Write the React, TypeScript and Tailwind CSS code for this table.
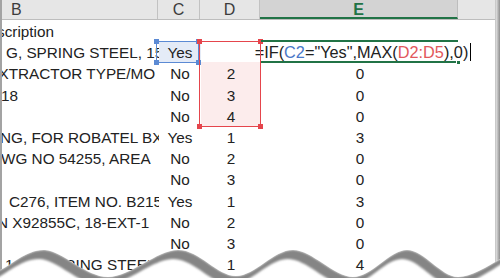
import React from "react";

type Row = {
  b: string;
  bShift: string;
  c: string;
  d: string;
  e: string;
  cFill?: string;
  dFill?: string;
};

const rows: Row[] = [
  { b: "Description", bShift: "ml-[-24.5px]", c: "", d: "", e: "" },
  { b: "G, SPRING STEEL, 15", bShift: "ml-[4px]", c: "Yes", d: "", e: "", cFill: "bg-[#e4ebf7]" },
  { b: "XTRACTOR TYPE/MO", bShift: "ml-[-3.5px]", c: "No", d: "2", e: "0", dFill: "bg-[#fcecec]" },
  { b: "18", bShift: "ml-[-1px]", c: "No", d: "3", e: "0", dFill: "bg-[#fcecec]" },
  { b: "", bShift: "ml-0", c: "No", d: "4", e: "0", dFill: "bg-[#fcecec]" },
  { b: "NG, FOR ROBATEL BX", bShift: "ml-[-2px]", c: "Yes", d: "1", e: "3" },
  { b: "WG NO 54255, AREA", bShift: "ml-[-1px]", c: "No", d: "2", e: "0" },
  { b: "", bShift: "ml-0", c: "No", d: "3", e: "0" },
  { b: "C276, ITEM NO. B215", bShift: "ml-[7px]", c: "Yes", d: "1", e: "3" },
  { b: "N X92855C, 18-EXT-1", bShift: "ml-[-5px]", c: "No", d: "2", e: "0" },
  { b: "", bShift: "ml-0", c: "No", d: "3", e: "0" },
  { b: "1-1/2 SPRING STEEL", bShift: "ml-[3px]", c: "Yes", d: "1", e: "4" },
];

function Formula() {
  return (
    <span className="relative ml-[6px] text-[16.3px]">
      =IF(<span className="text-[#4a78c8]">C2</span>="Yes",MAX(
      <span className="text-[#e2585c]">D2:D5</span>),0)
      <span className="inline-block w-[1px] h-[18px] bg-black align-[-3px] ml-[2px]" />
    </span>
  );
}

function Handle({ cls }: { cls: string }) {
  return <span className={`absolute w-[5px] h-[5px] ${cls}`} />;
}

// smooth curve through the points (Catmull-Rom turned into cubic Béziers)
function smooth(p: [number, number][]) {
  let d = `M${p[0][0]},${p[0][1]}`;
  for (let i = 0; i < p.length - 1; i++) {
    const p0 = p[i - 1] ?? p[i];
    const p1 = p[i];
    const p2 = p[i + 1];
    const p3 = p[i + 2] ?? p2;
    const c1x = p1[0] + (p2[0] - p0[0]) / 6;
    const c1y = p1[1] + (p2[1] - p0[1]) / 6;
    const c2x = p2[0] - (p3[0] - p1[0]) / 6;
    const c2y = p2[1] - (p3[1] - p1[1]) / 6;
    d += ` C${c1x.toFixed(1)},${c1y.toFixed(1)} ${c2x.toFixed(1)},${c2y.toFixed(1)} ${p2[0]},${p2[1]}`;
  }
  return d;
}

// torn paper edge along the bottom
function TornEdge() {
  const top = 226;
  const H = 278 - top;
  const edge: [number, number][] = (
    [
      [-12, 271],
      [0, 270],
      [45, 250],
      [108, 277],
      [178, 250],
      [236, 276],
      [293, 250],
      [353, 277],
      [407, 250],
      [458, 277],
      [512, 252],
    ] as [number, number][]
  ).map(([x, y]) => [x, y - top] as [number, number]);
  const shifted = edge.map(([x, y]) => [x - 5, y + 9] as [number, number]).reverse();
  const line = smooth(edge);
  const back = smooth(shifted).replace(/^M/, "L");
  const below = `${line} L512,${H + 4} L-12,${H + 4} Z`;
  const band = `${line} ${back} Z`;
  return (
    <svg className="absolute left-0 bottom-0" width={500} height={H} viewBox={`0 0 500 ${H}`}>
      <defs>
        <filter id="soft" x="-5%" y="-50%" width="110%" height="200%">
          <feGaussianBlur stdDeviation="1.1" />
        </filter>
        <clipPath id="under">
          <path d={below} />
        </clipPath>
      </defs>
      <path d={below} fill="#ffffff" />
      <g clipPath="url(#under)">
        <path d={band} fill="#858585" filter="url(#soft)" />
      </g>
    </svg>
  );
}

export default function App() {
  return (
    <div
      className="relative w-[500px] h-[278px] overflow-hidden bg-white text-[15.3px] text-[#222]"
      style={{ fontFamily: '"Liberation Sans", Arial, sans-serif' }}
    >
      <div className="flex w-[500px] h-[278px]">
        {/* sheet */}
        <div className="w-[495px] flex flex-col border-l-2 border-[#a3a3a3]">
          {/* column headers */}
          <div className="flex h-[20px] bg-[#e6e6e6] border-b border-[#bdbdbd] text-[#3c3c3c] text-[16px] leading-[19px]">
            <div className="w-[156px] pl-[9px] border-r border-[#c2c2c2]">B</div>
            <div className="w-[42px] text-center border-r border-[#c2c2c2]">C</div>
            <div className="w-[60px] text-center border-r border-[#c2c2c2]">D</div>
            <div className="w-[198px] text-center bg-[#d3d3d3] text-[#217346] font-bold border-b-2 border-[#217346] border-r border-r-[#bdbdbd]">
              E
            </div>
            <div className="flex-1" />
          </div>
          {/* cells */}
          {rows.map((r, i) => (
            <div key={i} className="flex h-[21.2px] leading-[23px]">
              <div className="w-[157px] overflow-hidden whitespace-nowrap">
                <span className={`inline-block ${r.bShift}`}>{r.b}</span>
              </div>
              <div className={`w-[42px] text-center ${r.cFill ?? ""}`}>{r.c}</div>
              <div className={`w-[60px] text-center ${r.dFill ?? ""}`}>{r.d}</div>
              <div className="w-[198px] flex justify-center whitespace-nowrap">
                {i === 1 ? <Formula /> : r.e}
              </div>
              <div className="flex-1" />
            </div>
          ))}
        </div>
        {/* page shadow on the right */}
        <div className="w-[5px] border-l border-[#c9c9c9] bg-gradient-to-r from-[#e2e2e2] to-[#8e8e8e]" />
      </div>

      {/* C2 reference box */}
      <div className="absolute left-[156px] top-[40.5px] w-[43px] h-[22px] border-[1.5px] border-[#5b8ad4]">
        <Handle cls="left-[-3px] top-[-3px] bg-[#5b8ad4]" />
        <Handle cls="right-[-3px] top-[-3px] bg-[#5b8ad4]" />
        <Handle cls="left-[-3px] bottom-[-3px] bg-[#5b8ad4]" />
        <Handle cls="right-[-3px] bottom-[-3px] bg-[#5b8ad4]" />
      </div>
      {/* D2:D5 reference box */}
      <div className="absolute left-[198.5px] top-[40.5px] w-[62px] h-[86px] border-[1.5px] border-[#e5454c]">
        <Handle cls="left-[-3px] top-[-3px] bg-[#e5454c]" />
        <Handle cls="right-[-3px] top-[-3px] bg-[#e5454c]" />
        <Handle cls="left-[-3px] bottom-[-3px] bg-[#e5454c]" />
        <Handle cls="right-[-3px] bottom-[-3px] bg-[#e5454c]" />
      </div>
      {/* active cell E2 */}
      <div className="absolute left-[261px] top-[40px] w-[197px] h-[22.5px] border-y-2 border-[#217346]">
        <span className="absolute right-[-3px] bottom-[-4px] w-[5px] h-[5px] bg-[#217346] border border-white" />
      </div>

      <TornEdge />
    </div>
  );
}
